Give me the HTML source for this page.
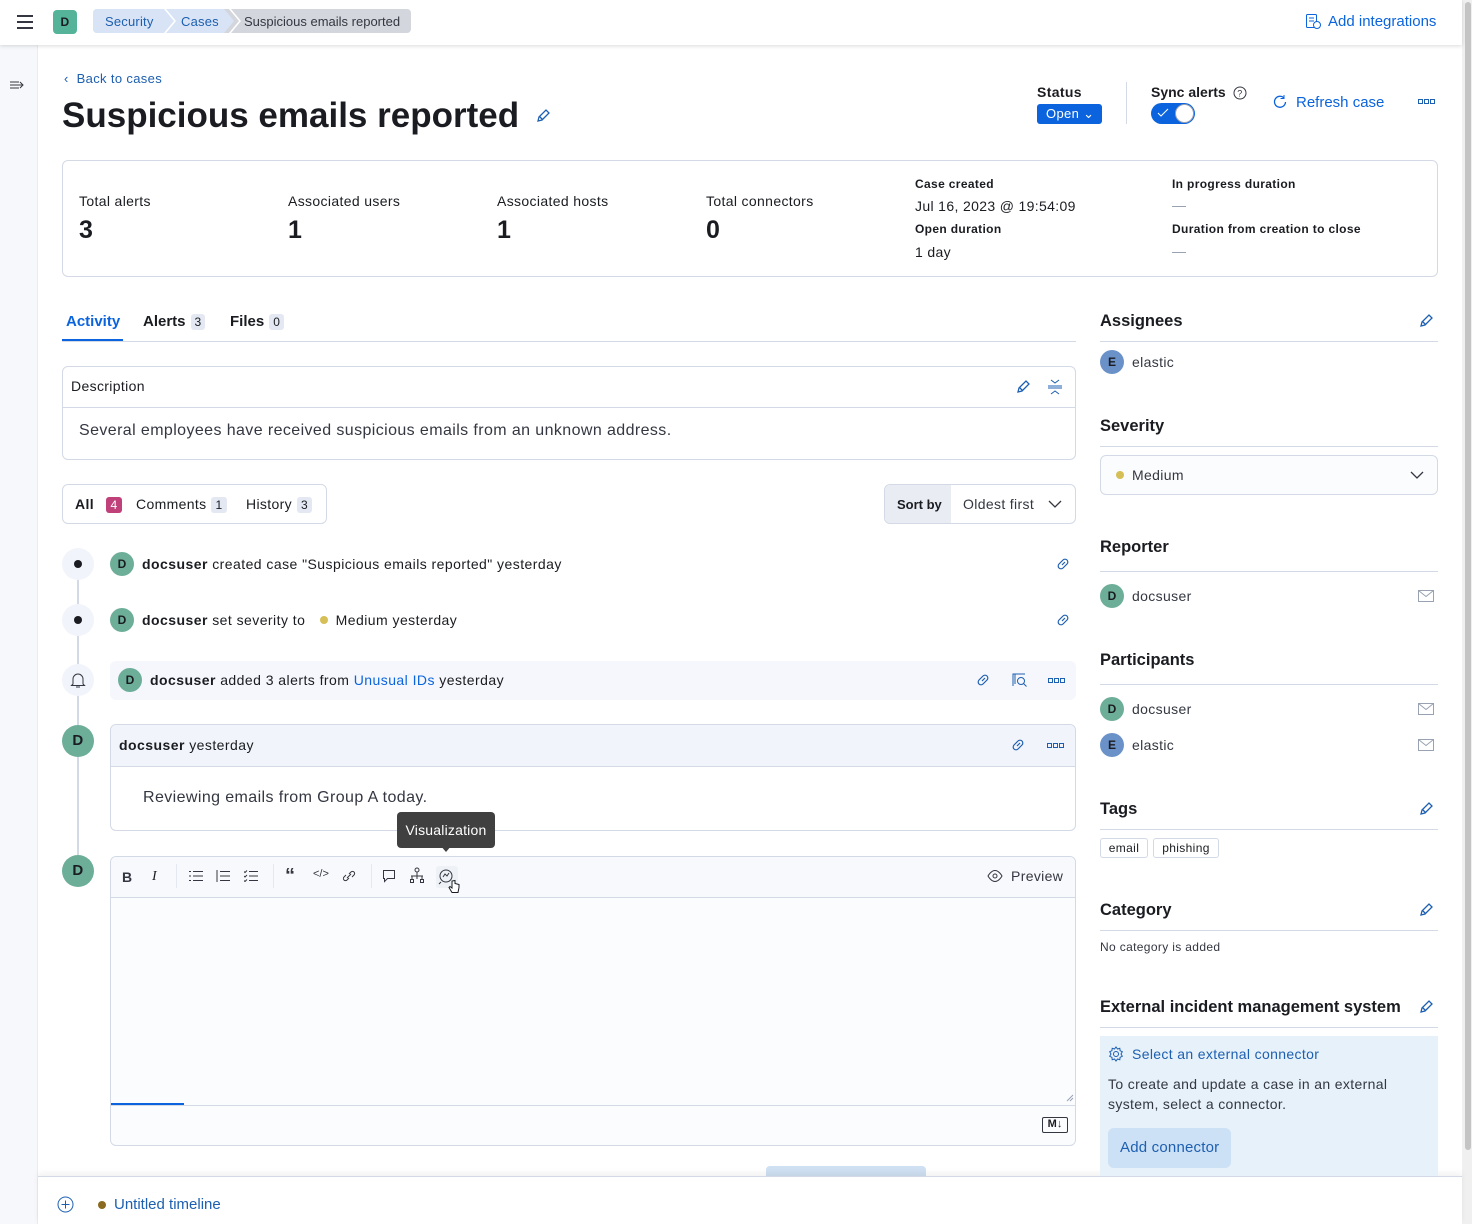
<!DOCTYPE html>
<html><head><meta charset="utf-8"><style>
*{box-sizing:border-box;margin:0;padding:0}
body{width:1472px;height:1224px;overflow:hidden;font-family:"Liberation Sans",sans-serif;color:#1a1c21;background:#fff;position:relative;font-size:14px;letter-spacing:0.35px}
.a{position:absolute}
.b{font-weight:bold}
.blue{color:#0b64dd}
.lnk{color:#1d5fb0}
.av{position:absolute;width:24px;height:24px;border-radius:50%;background:#6dae98;color:#1a1c21;font-size:12px;font-weight:bold;text-align:center;line-height:24px;letter-spacing:0}
.ave{background:#6b92c8}
.badge{display:inline-block;background:#e3e8f2;border-radius:3px;font-size:12px;padding:0 4px;line-height:16px;margin-left:5px;font-weight:normal}
.hr{position:absolute;height:1px;background:#d3dae6}
.h3{position:absolute;font-size:16.5px;font-weight:bold;letter-spacing:0}
svg{position:absolute}
</style></head><body>
<div class="a" style="left:0;top:45px;width:38px;height:1179px;background:#f7f8fc;border-right:1px solid #e9edf3"></div>
<div class="a" style="left:1462px;top:0;width:10px;height:1224px;background:#f0f0f0"></div>
<div class="a" style="left:1465px;top:2px;width:6px;height:1148px;background:#c4c4c4;border-radius:3px"></div>
<div class="a" style="left:0;top:0;width:1462px;height:45px;background:#fff;box-shadow:0 1px 4px rgba(0,0,0,.15)"></div>
<svg style="left:16px;top:14px" width="18" height="16"><path d="M1 2h16M1 8h16M1 14h16" stroke="#343741" stroke-width="2"/></svg>
<div class="a" style="left:53px;top:10px;width:24px;height:24px;border-radius:4px;background:#54b399;font-size:12px;font-weight:bold;text-align:center;line-height:24px">D</div>
<div class="a" style="left:93px;top:9px;width:318px;height:24px;border-radius:4px;background:#d3d6dc"></div>
<div class="a" style="left:93px;top:9px;width:141px;height:24px;border-radius:4px 0 0 4px;background:#d8e4f5;clip-path:polygon(0 0,131px 0,141px 50%,131px 100%,0 100%)"></div>
<div class="a" style="left:164px;top:9px;width:12px;height:24px;background:#fff;clip-path:polygon(0 0,2px 0,12px 50%,2px 100%,0 100%,10px 50%)"></div>
<div class="a" style="left:229px;top:9px;width:12px;height:24px;background:#fff;clip-path:polygon(0 0,2px 0,12px 50%,2px 100%,0 100%,10px 50%)"></div>
<div class="a lnk" style="left:105px;top:14px;font-size:13px;letter-spacing:0.2px">Security</div>
<div class="a lnk" style="left:181px;top:14px;font-size:13px;letter-spacing:0.2px">Cases</div>
<div class="a" style="left:244px;top:14px;font-size:13px;color:#343741;letter-spacing:0">Suspicious emails reported</div>
<svg style="left:1305px;top:13px" width="16" height="16"><rect x="1.5" y="1.5" width="10" height="13" rx="1" fill="none" stroke="#0b64dd"/><path d="M4 5h5M4 8h5" stroke="#0b64dd"/><circle cx="12" cy="12" r="3.5" fill="#fff" stroke="#0b64dd"/></svg>
<div class="a blue" style="left:1328px;top:13px;font-size:15px;letter-spacing:0">Add integrations</div>
<svg style="left:9px;top:79px" width="16" height="12"><path d="M1 3h9M1 9h9M1 6h13M11 3l3 3-3 3" stroke="#343741" fill="none"/></svg>

<div class="a lnk" style="left:64px;top:71px;font-size:13px">‹&nbsp; Back to cases</div>
<div class="a b" style="left:62px;top:96px;font-size:35px;letter-spacing:0">Suspicious emails reported</div>
<svg style="left:535px;top:108px" width="16" height="16"><path d="M3 13l1-4 7-7 3 3-7 7z M5 9l3 3" stroke="#1d5fb0" fill="none" stroke-width="1.3"/></svg>
<div class="a b" style="left:1037px;top:84px;font-size:14px">Status</div>
<div class="a" style="left:1037px;top:104px;width:65px;height:20px;background:#0b64dd;border-radius:3px;color:#fff;font-size:13px;padding-left:9px;line-height:20px">Open ⌄</div>
<div class="a" style="left:1126px;top:82px;width:1px;height:42px;background:#d3dae6"></div>
<div class="a b" style="left:1151px;top:84px;font-size:14px;letter-spacing:0">Sync alerts</div>
<svg style="left:1233px;top:86px" width="14" height="14"><circle cx="7" cy="7" r="6" fill="none" stroke="#343741"/><text x="4.3" y="10.5" font-size="9" font-family="Liberation Sans" fill="#343741">?</text></svg>
<div class="a" style="left:1151px;top:103px;width:44px;height:21px;border-radius:11px;background:#0b64dd"></div>
<svg style="left:1157px;top:108px" width="12" height="10"><path d="M1 5l3 3 7-7" stroke="#fff" fill="none"/></svg>
<div class="a" style="left:1175px;top:104px;width:19px;height:19px;border-radius:50%;background:#fff;border:1px solid #98a2b3"></div>
<svg style="left:1273px;top:95px" width="14" height="14"><path d="M11 3a5.5 5.5 0 1 0 1.5 4" stroke="#0b64dd" fill="none" stroke-width="1.3"/><path d="M11 0v3.5h-3.5" stroke="#0b64dd" fill="none"/></svg>
<div class="a blue" style="left:1296px;top:94px;font-size:15px;letter-spacing:0">Refresh case</div>
<svg style="left:1418px;top:99px" width="17" height="6"><rect x="0.5" y="0.5" width="4" height="4" fill="none" stroke="#1d5fb0"/><rect x="6.5" y="0.5" width="4" height="4" fill="none" stroke="#1d5fb0"/><rect x="12.5" y="0.5" width="4" height="4" fill="none" stroke="#1d5fb0"/></svg>

<div class="a" style="left:62px;top:160px;width:1376px;height:117px;border:1px solid #d3dae6;border-radius:6px"></div>
<div class="a" style="left:79px;top:193px;font-size:14px">Total alerts</div>
<div class="a b" style="left:79px;top:216px;font-size:25px">3</div>
<div class="a" style="left:288px;top:193px;font-size:14px">Associated users</div>
<div class="a b" style="left:288px;top:216px;font-size:25px">1</div>
<div class="a" style="left:497px;top:193px;font-size:14px">Associated hosts</div>
<div class="a b" style="left:497px;top:216px;font-size:25px">1</div>
<div class="a" style="left:706px;top:193px;font-size:14px">Total connectors</div>
<div class="a b" style="left:706px;top:216px;font-size:25px">0</div>
<div class="a b" style="left:915px;top:177px;font-size:12px">Case created</div>
<div class="a" style="left:915px;top:198px;font-size:14px">Jul 16, 2023 @ 19:54:09</div>
<div class="a b" style="left:915px;top:222px;font-size:12px">Open duration</div>
<div class="a" style="left:915px;top:244px;font-size:14px">1 day</div>
<div class="a b" style="left:1172px;top:177px;font-size:12px">In progress duration</div>
<div class="a" style="left:1172px;top:206px;width:14px;height:1px;background:#98a2b3"></div>
<div class="a b" style="left:1172px;top:222px;font-size:12px">Duration from creation to close</div>
<div class="a" style="left:1172px;top:252px;width:14px;height:1px;background:#98a2b3"></div>

<div class="a b blue" style="left:66px;top:313px;font-size:15px;letter-spacing:0">Activity</div>
<div class="a" style="left:62px;top:339px;width:61px;height:2px;background:#0b64dd"></div>
<div class="a b" style="left:143px;top:313px;font-size:15px;letter-spacing:0">Alerts<span class="badge">3</span></div>
<div class="a b" style="left:230px;top:313px;font-size:15px;letter-spacing:0">Files<span class="badge">0</span></div>
<div class="hr" style="left:62px;top:341px;width:1014px"></div>

<div class="a" style="left:62px;top:366px;width:1014px;height:94px;border:1px solid #d3dae6;border-radius:6px"></div>
<div class="hr" style="left:63px;top:407px;width:1012px"></div>
<div class="a" style="left:71px;top:378px;font-size:14px">Description</div>
<svg style="left:1015px;top:379px" width="16" height="16"><path d="M3 13l1-4 7-7 3 3-7 7z M5 9l3 3" stroke="#1d5fb0" fill="none" stroke-width="1.3"/></svg>
<svg style="left:1047px;top:378px" width="16" height="18"><path d="M4 2l4 3 4-3M1 8h14M1 10h14M4 16l4-3 4 3" stroke="#1d5fb0" fill="none"/></svg>
<div class="a" style="left:79px;top:422px;font-size:16px;color:#343741;letter-spacing:0.4px">Several employees have received suspicious emails from an unknown address.</div>

<div class="a" style="left:62px;top:484px;width:265px;height:40px;border:1px solid #d3dae6;border-radius:6px"></div>
<div class="a b" style="left:75px;top:496px;font-size:14px">All</div>
<div class="a" style="left:106px;top:497px;width:16px;height:16px;border-radius:3px;background:#c0407a;color:#fff;font-size:12px;text-align:center;line-height:16px">4</div>
<div class="a" style="left:136px;top:496px;font-size:14px">Comments<span class="badge">1</span></div>
<div class="a" style="left:246px;top:496px;font-size:14px">History<span class="badge b">3</span></div>
<div class="a" style="left:884px;top:484px;width:192px;height:40px;border:1px solid #d3dae6;border-radius:6px;overflow:hidden"><div style="width:66px;height:40px;background:#e9edf3"></div></div>
<div class="a b" style="left:897px;top:497px;font-size:13px;letter-spacing:0">Sort by</div>
<div class="a" style="left:963px;top:496px;font-size:14px;color:#343741">Oldest first</div>
<svg style="left:1048px;top:499px" width="14" height="10"><path d="M1 2l6 6 6-6" stroke="#343741" fill="none" stroke-width="1.3"/></svg>

<div class="a" style="left:77px;top:564px;width:2px;height:292px;background:#d3dae6"></div>
<div class="a" style="left:62px;top:548px;width:32px;height:32px;border-radius:50%;background:#f1f4fa"></div>
<div class="a" style="left:74px;top:560px;width:8px;height:8px;border-radius:50%;background:#1a1c21"></div>
<div class="av" style="left:110px;top:552px">D</div>
<div class="a" style="left:142px;top:556px;font-size:14px;letter-spacing:0.45px"><b>docsuser</b> created case "Suspicious emails reported" yesterday</div>
<div class="a" style="left:62px;top:604px;width:32px;height:32px;border-radius:50%;background:#f1f4fa"></div>
<div class="a" style="left:74px;top:616px;width:8px;height:8px;border-radius:50%;background:#1a1c21"></div>
<div class="av" style="left:110px;top:608px">D</div>
<div class="a" style="left:142px;top:612px;font-size:14px;letter-spacing:0.45px"><b>docsuser</b> set severity to <span style="display:inline-block;width:8px;height:8px;border-radius:50%;background:#d6bf57;margin:0 8px 1px 10px"></span>Medium yesterday</div>
<svg style="left:1055px;top:556px" width="16" height="16"><path d="M7 9l3-3M6 6l-2 2a2.5 2.5 0 0 0 4 4l2-2M10 10l2-2a2.5 2.5 0 0 0-4-4L6 6" stroke="#1d5fb0" fill="none" stroke-width="1.2"/></svg>
<svg style="left:1055px;top:612px" width="16" height="16"><path d="M7 9l3-3M6 6l-2 2a2.5 2.5 0 0 0 4 4l2-2M10 10l2-2a2.5 2.5 0 0 0-4-4L6 6" stroke="#1d5fb0" fill="none" stroke-width="1.2"/></svg>

<div class="a" style="left:62px;top:664px;width:32px;height:32px;border-radius:50%;background:#f1f4fa"></div>
<svg style="left:69px;top:671px" width="18" height="18"><path d="M4 13V8a5 5 0 0 1 10 0v5l1.5 1.5h-13z M7 16h4" stroke="#343741" fill="none"/></svg>
<div class="a" style="left:110px;top:661px;width:966px;height:39px;background:#f5f7fc;border-radius:6px"></div>
<div class="av" style="left:118px;top:668px">D</div>
<div class="a" style="left:150px;top:672px;font-size:14px;letter-spacing:0.45px"><b>docsuser</b> added 3 alerts from <span style="color:#0b64dd">Unusual IDs</span> yesterday</div>
<svg style="left:975px;top:672px" width="16" height="16"><path d="M7 9l3-3M6 6l-2 2a2.5 2.5 0 0 0 4 4l2-2M10 10l2-2a2.5 2.5 0 0 0-4-4L6 6" stroke="#1d5fb0" fill="none" stroke-width="1.2"/></svg>
<svg style="left:1011px;top:672px" width="18" height="16"><path d="M2 14V2h12M4 2v10" stroke="#1d5fb0" fill="none"/><circle cx="10" cy="9" r="3.5" stroke="#1d5fb0" fill="none"/><path d="M12.5 11.5l3 3" stroke="#1d5fb0"/></svg>
<svg style="left:1048px;top:678px" width="17" height="6"><rect x="0.5" y="0.5" width="4" height="4" fill="none" stroke="#1d5fb0"/><rect x="6.5" y="0.5" width="4" height="4" fill="none" stroke="#1d5fb0"/><rect x="12.5" y="0.5" width="4" height="4" fill="none" stroke="#1d5fb0"/></svg>

<div class="a" style="left:62px;top:725px;width:32px;height:32px;border-radius:50%;background:#6dae98;font-weight:bold;font-size:15px;text-align:center;line-height:32px">D</div>
<div class="a" style="left:110px;top:724px;width:966px;height:107px;border:1px solid #d3dae6;border-radius:6px;overflow:hidden"><div style="height:42px;background:#f1f4fa;border-bottom:1px solid #d3dae6"></div></div>
<div class="a" style="left:119px;top:737px;font-size:14px;letter-spacing:0.45px"><b>docsuser</b> yesterday</div>
<svg style="left:1010px;top:737px" width="16" height="16"><path d="M7 9l3-3M6 6l-2 2a2.5 2.5 0 0 0 4 4l2-2M10 10l2-2a2.5 2.5 0 0 0-4-4L6 6" stroke="#1d5fb0" fill="none" stroke-width="1.2"/></svg>
<svg style="left:1047px;top:743px" width="17" height="6"><rect x="0.5" y="0.5" width="4" height="4" fill="none" stroke="#1d5fb0"/><rect x="6.5" y="0.5" width="4" height="4" fill="none" stroke="#1d5fb0"/><rect x="12.5" y="0.5" width="4" height="4" fill="none" stroke="#1d5fb0"/></svg>
<div class="a" style="left:143px;top:789px;font-size:16px;color:#343741;letter-spacing:0.4px">Reviewing emails from Group A today.</div>

<div class="a" style="left:62px;top:855px;width:32px;height:32px;border-radius:50%;background:#6dae98;font-weight:bold;font-size:15px;text-align:center;line-height:32px">D</div>
<div class="a" style="left:110px;top:856px;width:966px;height:290px;border:1px solid #d3dae6;border-radius:6px;background:#fbfcfd;overflow:hidden">
 <div style="height:41px;background:#f8f9fc;border-bottom:1px solid #d3dae6"></div>
 <div style="position:absolute;left:0;top:246px;width:73px;height:2px;background:#0b64dd"></div>
 <div style="position:absolute;left:0;top:248px;width:966px;height:1px;background:#d3dae6"></div>
</div>
<div class="a b" style="left:122px;top:869px;font-size:14px;color:#343741">B</div>
<div class="a" style="left:152px;top:869px;font-size:14px;font-style:italic;font-family:'Liberation Serif',serif">I</div>
<div class="a" style="left:176px;top:864px;width:1px;height:24px;background:#e3e8f2"></div>
<svg style="left:189px;top:870px" width="14" height="12"><path d="M4 1.5h10M4 6h10M4 10.5h10M0 1.5h2M0 6h2M0 10.5h2" stroke="#343741"/></svg>
<svg style="left:216px;top:870px" width="14" height="12"><path d="M4 1.5h10M4 6h10M4 10.5h10M1 0v12" stroke="#343741"/></svg>
<svg style="left:244px;top:870px" width="14" height="12"><path d="M5 1.5h9M5 6h9M5 10.5h9M0 1.5l1 1 2-2M0 6l1 1 2-2M0 10.5l1 1 2-2" stroke="#343741" fill="none"/></svg>
<div class="a" style="left:273px;top:864px;width:1px;height:24px;background:#e3e8f2"></div>
<div class="a b" style="left:285px;top:866px;font-size:20px;color:#343741;line-height:20px">“</div>
<div class="a" style="left:313px;top:868px;font-size:11px;color:#343741;letter-spacing:0">&lt;/&gt;</div>
<svg style="left:342px;top:869px" width="14" height="14"><path d="M5 9l4-4M4 6l-2 2a2 2 0 0 0 3 3l2-2M10 8l2-2a2 2 0 0 0-3-3L7 5" stroke="#343741" fill="none"/></svg>
<div class="a" style="left:371px;top:864px;width:1px;height:24px;background:#e3e8f2"></div>
<svg style="left:382px;top:869px" width="14" height="14"><path d="M1.5 1.5h11v8h-7l-3 3v-3h-1z" stroke="#343741" fill="none"/></svg>
<svg style="left:409px;top:867px" width="16" height="18"><circle cx="8" cy="3" r="2" stroke="#343741" fill="none"/><path d="M8 5v4M2 9h12M3 9v3M8 9v3M13 9v3" stroke="#343741"/><rect x="1.5" y="12.5" width="3" height="3" stroke="#343741" fill="none"/><rect x="11.5" y="12.5" width="3" height="3" stroke="#343741" fill="none"/></svg>
<div class="a" style="left:436px;top:866px;width:22px;height:22px;background:#eef1f6;border-radius:3px"></div>
<svg style="left:438px;top:868px" width="26" height="30"><circle cx="8" cy="8" r="6" stroke="#343741" fill="none"/><path d="M5 9l2-3 2 2 2-3M3 14l-2 2" stroke="#343741" fill="none"/><path d="M14 13v7l-2-1.5-1 1 3 5h6l1-5v-3l-4-1v-3z" fill="#fff" stroke="#1a1c21"/></svg>
<svg style="left:987px;top:869px" width="16" height="14"><path d="M1 7s3-5.5 7-5.5S15 7 15 7s-3 5.5-7 5.5S1 7 1 7z" stroke="#343741" fill="none"/><circle cx="8" cy="7" r="2" stroke="#343741" fill="none"/></svg>
<div class="a" style="left:1011px;top:868px;font-size:14px;color:#343741">Preview</div>
<svg style="left:1066px;top:1094px" width="8" height="8"><path d="M1 7l6-6M4 7l3-3" stroke="#98a2b3"/></svg>
<div class="a" style="left:1042px;top:1117px;width:26px;height:16px;border:1.5px solid #343741;border-radius:2px;font-size:11px;font-weight:bold;text-align:center;line-height:13px;letter-spacing:0">M↓</div>

<div class="a" style="left:397px;top:812px;width:98px;height:36px;background:#404040;border-radius:4px;color:#fff;font-size:14px;text-align:center;line-height:36px;letter-spacing:0.2px">Visualization</div>
<div class="a" style="left:440px;top:845px;width:0;height:0;border-left:6px solid transparent;border-right:6px solid transparent;border-top:7px solid #404040"></div>

<div class="a" style="left:766px;top:1166px;width:160px;height:12px;background:#cfe0f2;border-radius:4px 4px 0 0"></div>
<div class="a" style="left:38px;top:1176px;width:1424px;height:48px;background:#fff;border-top:1px solid #d3dae6;box-shadow:0 -3px 6px rgba(0,0,0,.06)"></div>
<svg style="left:57px;top:1196px" width="17" height="17"><circle cx="8.5" cy="8.5" r="7.5" stroke="#1d5fb0" fill="none"/><path d="M8.5 4.5v8M4.5 8.5h8" stroke="#1d5fb0"/></svg>
<div class="a" style="left:98px;top:1201px;width:8px;height:8px;border-radius:50%;background:#8a6a1f"></div>
<div class="a lnk" style="left:114px;top:1196px;font-size:15px;letter-spacing:0">Untitled timeline</div>

<div class="h3" style="left:1100px;top:312px">Assignees</div>
<svg style="left:1418px;top:313px" width="16" height="16"><path d="M3 13l1-4 7-7 3 3-7 7z M5 9l3 3" stroke="#1d5fb0" fill="none" stroke-width="1.3"/></svg>
<div class="hr" style="left:1100px;top:341px;width:338px"></div>
<div class="av ave" style="left:1100px;top:350px">E</div>
<div class="a" style="left:1132px;top:354px;font-size:14px;color:#343741">elastic</div>

<div class="h3" style="left:1100px;top:417px">Severity</div>
<div class="hr" style="left:1100px;top:446px;width:338px"></div>
<div class="a" style="left:1100px;top:455px;width:338px;height:40px;border:1px solid #d3dae6;border-radius:6px;background:#fbfcfd"></div>
<div class="a" style="left:1116px;top:471px;width:8px;height:8px;border-radius:50%;background:#d6bf57"></div>
<div class="a" style="left:1132px;top:467px;font-size:14px;color:#343741">Medium</div>
<svg style="left:1410px;top:470px" width="14" height="10"><path d="M1 2l6 6 6-6" stroke="#343741" fill="none" stroke-width="1.3"/></svg>

<div class="h3" style="left:1100px;top:538px">Reporter</div>
<div class="hr" style="left:1100px;top:571px;width:338px"></div>
<div class="av" style="left:1100px;top:584px">D</div>
<div class="a" style="left:1132px;top:588px;font-size:14px;color:#343741">docsuser</div>
<svg style="left:1418px;top:590px" width="16" height="12"><rect x="0.5" y="0.5" width="15" height="11" stroke="#98a2b3" fill="none"/><path d="M0.5 0.5l7.5 6 7.5-6" stroke="#98a2b3" fill="none"/></svg>

<div class="h3" style="left:1100px;top:651px">Participants</div>
<div class="hr" style="left:1100px;top:684px;width:338px"></div>
<div class="av" style="left:1100px;top:697px">D</div>
<div class="a" style="left:1132px;top:701px;font-size:14px;color:#343741">docsuser</div>
<svg style="left:1418px;top:703px" width="16" height="12"><rect x="0.5" y="0.5" width="15" height="11" stroke="#98a2b3" fill="none"/><path d="M0.5 0.5l7.5 6 7.5-6" stroke="#98a2b3" fill="none"/></svg>
<div class="av ave" style="left:1100px;top:733px">E</div>
<div class="a" style="left:1132px;top:737px;font-size:14px;color:#343741">elastic</div>
<svg style="left:1418px;top:739px" width="16" height="12"><rect x="0.5" y="0.5" width="15" height="11" stroke="#98a2b3" fill="none"/><path d="M0.5 0.5l7.5 6 7.5-6" stroke="#98a2b3" fill="none"/></svg>

<div class="h3" style="left:1100px;top:800px">Tags</div>
<svg style="left:1418px;top:801px" width="16" height="16"><path d="M3 13l1-4 7-7 3 3-7 7z M5 9l3 3" stroke="#1d5fb0" fill="none" stroke-width="1.3"/></svg>
<div class="hr" style="left:1100px;top:829px;width:338px"></div>
<div class="a" style="left:1100px;top:838px;width:48px;height:20px;border:1px solid #d3dae6;border-radius:3px;font-size:12px;text-align:center;line-height:18px">email</div>
<div class="a" style="left:1153px;top:838px;width:66px;height:20px;border:1px solid #d3dae6;border-radius:3px;font-size:12px;text-align:center;line-height:18px">phishing</div>

<div class="h3" style="left:1100px;top:901px">Category</div>
<svg style="left:1418px;top:902px" width="16" height="16"><path d="M3 13l1-4 7-7 3 3-7 7z M5 9l3 3" stroke="#1d5fb0" fill="none" stroke-width="1.3"/></svg>
<div class="hr" style="left:1100px;top:930px;width:338px"></div>
<div class="a" style="left:1100px;top:940px;font-size:12px;color:#343741">No category is added</div>

<div class="h3" style="left:1100px;top:998px">External incident management system</div>
<svg style="left:1418px;top:999px" width="16" height="16"><path d="M3 13l1-4 7-7 3 3-7 7z M5 9l3 3" stroke="#1d5fb0" fill="none" stroke-width="1.3"/></svg>
<div class="hr" style="left:1100px;top:1027px;width:338px"></div>
<div class="a" style="left:1100px;top:1036px;width:338px;height:140px;background:#e6f1fa"></div>
<svg style="left:1108px;top:1046px" width="16" height="16"><circle cx="8" cy="8" r="2.5" stroke="#1d5fb0" fill="none"/><path d="M8 1l1.5 2 2.3-.7.3 2.4 2.2 1L13 8l1.3 2.3-2.2 1-.3 2.4-2.3-.7L8 15l-1.5-2-2.3.7-.3-2.4-2.2-1L3 8 1.7 5.7l2.2-1 .3-2.4 2.3.7z" stroke="#1d5fb0" fill="none"/></svg>
<div class="a lnk" style="left:1132px;top:1046px;font-size:14px">Select an external connector</div>
<div class="a" style="left:1108px;top:1074px;font-size:14px;color:#343741;width:295px;line-height:20px">To create and update a case in an external system, select a connector.</div>
<div class="a" style="left:1108px;top:1128px;width:123px;height:40px;background:#cce1f5;border-radius:6px"></div>
<div class="a lnk" style="left:1120px;top:1139px;font-size:15px;letter-spacing:0.2px">Add connector</div>
</body></html>
